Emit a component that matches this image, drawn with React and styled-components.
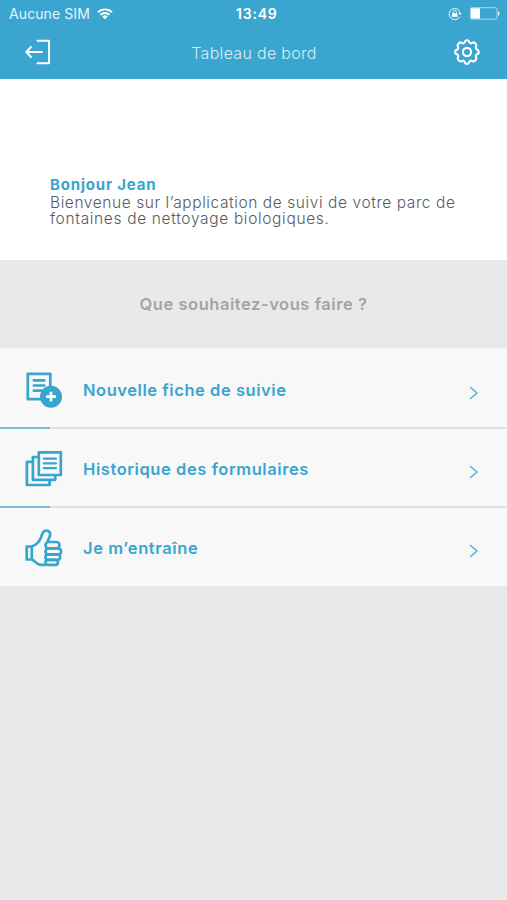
import React from "react"
import styled, { createGlobalStyle } from "styled-components"

const rows = [
    { label: "Nouvelle fiche de suivie", icon: "new", spacing: "0.55px" },
    { label: "Historique des formulaires", icon: "history", spacing: "0.58px" },
    { label: "Je m’entraîne", icon: "thumb", spacing: "0.6px" },
]

const App = () => {
    return (
        <Page>
            <GlobalStyle />
            <Header>
                <StatusBar>
                    <Carrier>
                        <span>Aucune SIM</span>
                        <WifiIcon />
                    </Carrier>
                    <Clock>13:49</Clock>
                    <Battery>
                        <LockIcon />
                        <BatteryIcon />
                    </Battery>
                </StatusBar>
                <NavBar>
                    <IconButton aria-label="Déconnexion"><ExitIcon /></IconButton>
                    <Title>Tableau de bord</Title>
                    <IconButton aria-label="Réglages"><GearIcon /></IconButton>
                </NavBar>
            </Header>
            <Welcome>
                <Hello>Bonjour Jean</Hello>
                <Message $spacing="0.58px">Bienvenue sur l’application de suivi de votre parc de</Message>
                <Message $spacing="0.66px">fontaines de nettoyage biologiques.</Message>
            </Welcome>
            <Question>Que souhaitez-vous faire ?</Question>
            <Menu>
                {rows.map((row) => (
                    <Row key={row.label}>
                        <RowIcon name={row.icon} />
                        <Label $spacing={row.spacing}>{row.label}</Label>
                        <Chevron width="10" height="14" viewBox="0 0 10 14">
                            <path d="M1 1l7 6-7 6" />
                        </Chevron>
                    </Row>
                ))}
            </Menu>
        </Page>
    )
}
export default App

const WifiIcon = () => (
    <svg width="16" height="12" viewBox="0 0 16 12" fill="none" stroke="#fff" strokeWidth="1.9">
        <path d="M1 4.2a10 10 0 0 1 14 0M3.5 6.9a6.4 6.4 0 0 1 9 0" />
        <path d="M8 11.3L5.3 8.6a3.9 3.9 0 0 1 5.4 0z" fill="#fff" stroke="none" />
    </svg>
)

const LockIcon = () => (
    <svg width="14" height="14" viewBox="0 0 14 14" fill="none" stroke="#e4f4fb" strokeWidth="1">
        <path d="M11.8 9.4A5.6 5.6 0 1 1 12.2 6" />
        <path d="M10.4 6h3.2L12 8.3z" fill="#e4f4fb" stroke="none" />
        <path d="M5 6.5V5.2a1.7 1.7 0 0 1 3.4 0v1.3" />
        <path d="M4 6.2h5.4v3.7H4z" fill="#fff" stroke="none" />
    </svg>
)

const BatteryIcon = () => (
    <svg width="30" height="13" viewBox="0 0 30 13">
        <rect x=".5" y=".7" width="26.5" height="11.4" rx="1.2" fill="none" stroke="#a9daee" />
        <path d="M1 1.2h9v10.4H1z" fill="#fff" />
        <path d="M28 4.2c2 .5 2 4 0 4.5z" fill="#e4f4fb" />
    </svg>
)

const ExitIcon = () => (
    <svg width="26" height="26" viewBox="0 0 26 26" fill="none" stroke="#fff" strokeWidth="1.9" strokeLinecap="round" strokeLinejoin="round">
        <path d="M12.5 1.7H24v22.6H12.5M17 13H1.5M6 8l-4.7 5L6 18" />
    </svg>
)

const GearIcon = () => (
    <svg width="26" height="26" viewBox="0 0 26 26" fill="none" stroke="#fff" strokeWidth="2.1" strokeLinejoin="round">
        <path d="M10.8 3.2Q11 1.2 13 1.2T15.2 3.2Q16.5 5 18.4 3.8Q20 2.8 21.3 4.4T22.2 7.2Q21.2 9.5 23 10.5Q24.8 11 24.8 13T22.8 15.3Q21 16.5 22.2 18.5Q23 20 21.4 21.4T18.4 22.2Q16.5 21 15.3 22.8Q15 24.8 13 24.8T10.7 22.8Q9.5 21 7.6 22.2Q6 23 4.6 21.4T3.8 18.5Q5 16.5 3.2 15.3Q1.2 15 1.2 13T3.2 10.5Q5 9.5 3.8 7.4Q3 6 4.6 4.4T7.6 3.8Q9.5 5 10.8 3.2Z" />
        <circle cx="13" cy="13" r="4.1" />
    </svg>
)

const RowIcon = ({ name }) => (
    <Glyph width="38" height="38" viewBox="0 0 38 38">
        {name === "new" && (
            <>
                <path d="M2.8 2.8h22.5v25.4H2.8z" />
                <path d="M8.8 9.3h10.5M8.8 14.5h10.5M8.8 19.7h9" strokeLinecap="round" />
                <circle cx="26" cy="25.7" r="11" fill="#38a5cf" stroke="none" />
                <path d="M26 20.8v9.8M21.1 25.7h9.8" stroke="#fff" />
            </>
        )}
        {name === "history" && (
            <>
                <path d="M13.8 2.3h22V25h-22z" />
                <path d="M13.8 7H7.9v22.8h22.3V25M7.9 11.8h-6V35h22.7v-5.2" />
                <path d="M18.8 8.7H31M18.8 13.4H31M18.8 18.1H31" strokeLinecap="round" strokeWidth="2.2" />
            </>
        )}
        {name === "thumb" && (
            <>
                <path d="M1.7 17.5h5.1v13H1.7z" />
                <path d="M7 17.3c4-1.3 7.3-4.8 8.9-8.6 1-2.5 1.2-5.5 3.5-6.7 2.5-1.3 5.6.2 5.8 2.6.2 3-1.6 5.3-2.9 8.2M7 30.6c3.3 1 3.7 4.6 8.5 5.2h5.4" />
                <rect x="20.5" y="13" width="14" height="6.4" rx="3.1" />
                <rect x="20.5" y="19.4" width="15.7" height="6" rx="3" />
                <rect x="20.5" y="25.4" width="14.6" height="5.5" rx="2.7" />
                <rect x="20.5" y="30.9" width="12.3" height="5" rx="2.5" />
            </>
        )}
    </Glyph>
)

const GlobalStyle = createGlobalStyle`
    body {
        margin: 0;
        background-color: #e9e9e9;
        font-family: Inter, "Open Sans", sans-serif;
    }
`
const Page = styled.div`
    width: 100%;
    min-height: 100vh;
    background-color: #e9e9e9;
`
const Header = styled.header`
    height: 79px;
    background-color: #3aa6d0;
    color: white;
`
const StatusBar = styled.div`
    height: 27px;
    padding: 0 7px 0 9px;
    display: grid;
    grid-template-columns: 227px auto 1fr;
    align-items: center;
    font-size: 14px;
`
const Carrier = styled.div`
    display: flex;
    align-items: center;
    gap: 7px;
    letter-spacing: 0.1px;
    color: #e4f4fb;
`
const Clock = styled.span`
    font-weight: 600;
    letter-spacing: 0.8px;
`
const Battery = styled.div`
    display: flex;
    align-items: center;
    justify-content: flex-end;
    gap: 8px;
`
const NavBar = styled.div`
    height: 49px;
    padding: 0 27px 0 25px;
    display: flex;
    align-items: center;
    justify-content: space-between;
`
const IconButton = styled.button`
    padding: 0;
    border: none;
    background: none;
    display: flex;
    cursor: pointer;
`
const Title = styled.h1`
    margin: 0;
    padding: 3px 0 0 3px;
    font-size: 16px;
    font-weight: 300;
    letter-spacing: 0.3px;
    color: #d5eef8;
`
const Welcome = styled.section`
    height: 181px;
    padding: 97px 50px 0;
    box-sizing: border-box;
    background-color: white;
`
const Hello = styled.h2`
    margin: 0;
    font-size: 15px;
    line-height: 18px;
    font-weight: 700;
    letter-spacing: 0.82px;
    color: #38a5cf;
`
const Message = styled.p`
    margin: 0;
    font-size: 15.5px;
    line-height: 16px;
    font-weight: 300;
    letter-spacing: ${({ $spacing }) => $spacing};
    white-space: nowrap;
    color: #555b5f;

    ${Hello} + & {
        margin-top: 1px;
    }
`
const Question = styled.div`
    height: 87px;
    padding-bottom: 1px;
    display: flex;
    align-items: center;
    justify-content: center;
    font-size: 16.5px;
    font-weight: 600;
    letter-spacing: 0.55px;
    color: #a2a5a6;
`
const Menu = styled.div`
    background-color: #f8f8f8;
`
const Row = styled.div`
    height: 79px;
    padding: 1px 28px 0 25px;
    box-sizing: border-box;
    display: flex;
    align-items: center;
    cursor: pointer;
    background: linear-gradient(to right, #76bfdb 50px, #dfe0e0 50px, #dfe0e0 506px, transparent 506px) bottom / 100% 2px no-repeat;

    &:first-child {
        height: 81px;
        padding-top: 3px;
    }

    &:last-child {
        height: 78px;
        padding-top: 2px;
        background: none;
    }
`
const Glyph = styled.svg`
    flex: none;
    fill: none;
    stroke: #38a5cf;
    stroke-width: 2.7;
    stroke-linejoin: round;
`
const Label = styled.span`
    flex: 1;
    margin-left: 20px;
    font-size: 16.5px;
    font-weight: 600;
    letter-spacing: ${({ $spacing }) => $spacing};
    color: #38a5cf;
`
const Chevron = styled.svg`
    margin-top: 5px;
    fill: none;
    stroke: #5ab3d5;
    stroke-width: 1.6;
`
